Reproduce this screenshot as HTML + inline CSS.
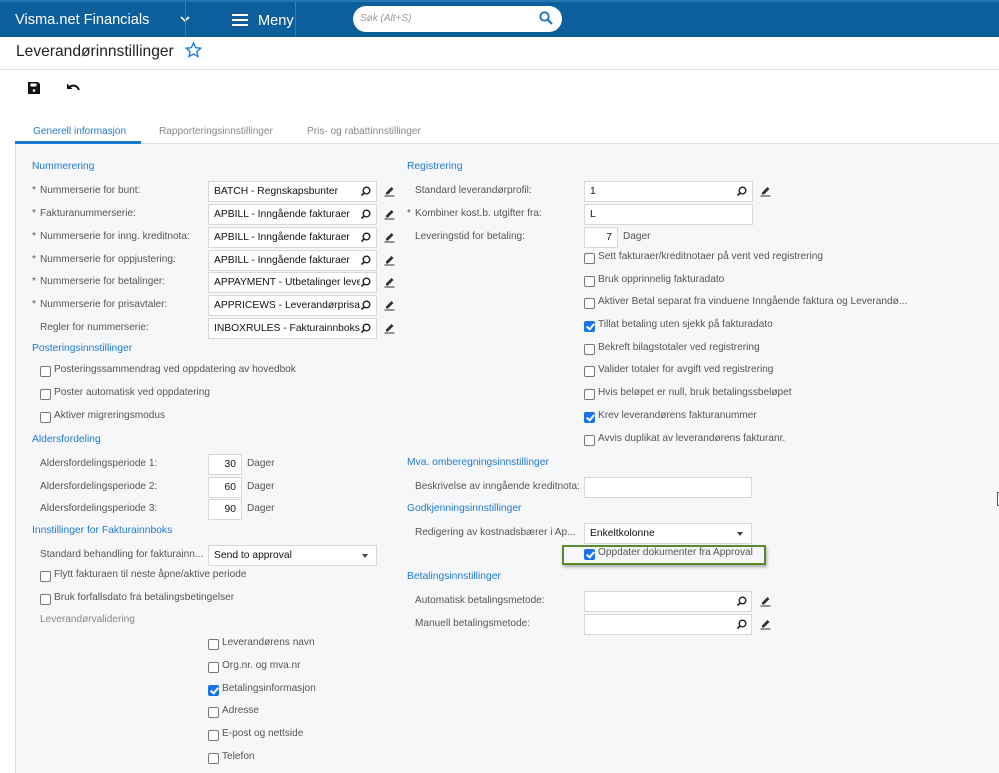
<!DOCTYPE html>
<html><head><meta charset="utf-8"><style>
*{box-sizing:border-box;margin:0;padding:0}
body{width:999px;height:773px;overflow:hidden;background:#fff;font-family:"Liberation Sans",Arial,sans-serif;font-size:10.1px;color:#555;position:relative}
.a{position:absolute;white-space:nowrap;line-height:16px}
.h{color:#1f7ad0;font-size:10.3px}
.in{position:absolute;height:21px;background:#fff;border:1px solid #d6d9dc;color:#111;font-size:10.3px;line-height:19px;padding-left:5px;white-space:nowrap;overflow:hidden}
.cb{position:absolute;width:11px;height:11px;border:1px solid #777;border-radius:2px;background:#fff}
.cb.on{background:#1a73e8;border-color:#1a73e8}
.cb.on:after{content:"";position:absolute;left:3px;top:0px;width:3px;height:6px;border:solid #fff;border-width:0 2px 2px 0;transform:rotate(40deg)}
.dd{position:absolute;right:8px;top:8px;border-left:3.5px solid transparent;border-right:3.5px solid transparent;border-top:4px solid #444}
.st{position:absolute;left:-8px}
</style></head><body>
<div style="position:absolute;left:0;top:0;width:999px;height:37px;background:#0d5f9c;border-top:2px solid #2377b5"></div>
<div class="a" style="left:15px;top:10px;font-size:14.6px;line-height:20px;color:#fff">Visma.net Financials</div>
<svg style="position:absolute;left:180px;top:16px" width="10" height="7"><path d="M1 1l4 4 4-4" stroke="#fff" stroke-width="1.6" fill="none"/></svg>
<div style="position:absolute;left:185px;top:2px;width:1px;height:35px;background:#3a7db0"></div>
<div style="position:absolute;left:295px;top:2px;width:1px;height:35px;background:#3a7db0"></div>
<svg style="position:absolute;left:232px;top:14px" width="16" height="12"><path d="M0 1h16M0 6h16M0 11h16" stroke="#fff" stroke-width="2"/></svg>
<div class="a" style="left:258px;top:11px;font-size:14.6px;line-height:20px;color:#fff">Meny</div>
<div style="position:absolute;left:353px;top:6px;width:209px;height:26px;background:#fff;border-radius:13px"></div>
<div class="a" style="left:360px;top:11px;font-size:10px;color:#999;font-style:italic">Søk (Alt+S)</div>
<svg style="position:absolute;left:539px;top:11px" width="14" height="14"><circle cx="5.5" cy="5.5" r="4.2" stroke="#1a6fb0" stroke-width="1.8" fill="none"/><path d="M8.5 8.5l4.5 4.5" stroke="#1a6fb0" stroke-width="2"/></svg>
<div class="a" style="left:16px;top:42px;font-size:15.6px;line-height:20px;color:#222">Leverandørinnstillinger</div>
<svg style="position:absolute;left:185px;top:42px" width="17" height="16" viewBox="0 0 24 23"><path d="M12 1.5l3.1 6.6 7.2.8-5.4 4.9 1.5 7.1L12 17.3l-6.4 3.6 1.5-7.1L1.7 8.9l7.2-.8z" fill="none" stroke="#1f7ad0" stroke-width="2"/></svg>
<div style="position:absolute;left:0;top:69px;width:999px;height:1px;background:#e2e2e2"></div>
<svg style="position:absolute;left:28px;top:82px" width="12" height="12"><path d="M0 0h10l2 2v10H0z" fill="#111"/><rect x="2.5" y="1.5" width="6" height="3" fill="#fff"/><circle cx="6" cy="8.5" r="1.3" fill="#fff"/></svg>
<svg style="position:absolute;left:67px;top:83px" width="13" height="10"><path d="M2 5C4 1.5 10 1.5 12 7" stroke="#111" stroke-width="2" fill="none"/><path d="M0 0.5v5.5h5.5z" fill="#111"/></svg>
<div class="a" style="left:33px;top:124px;color:#1f7ad0">Generell informasjon</div>
<div class="a" style="left:159px;top:124px;color:#888">Rapporteringsinnstillinger</div>
<div class="a" style="left:307px;top:124px;color:#888">Pris- og rabattinnstillinger</div>
<div style="position:absolute;left:15px;top:143px;width:984px;height:630px;background:#f6f7f9;border-left:1px solid #dcdcdc;border-top:1px solid #e4e4e4"></div>
<div style="position:absolute;left:15px;top:141px;width:126px;height:3px;background:#1c7bd0"></div>

<!-- left -->
<div class="a h" style="left:32px;top:159px">Nummerering</div>
<div class="a" style="left:40px;top:183px"><span class="st">*</span>Nummerserie for bunt:</div>
<div class="a" style="left:40px;top:206px"><span class="st">*</span>Fakturanummerserie:</div>
<div class="a" style="left:40px;top:229px"><span class="st">*</span>Nummerserie for inng. kreditnota:</div>
<div class="a" style="left:40px;top:252px"><span class="st">*</span>Nummerserie for oppjustering:</div>
<div class="a" style="left:40px;top:274px"><span class="st">*</span>Nummerserie for betalinger:</div>
<div class="a" style="left:40px;top:297px"><span class="st">*</span>Nummerserie for prisavtaler:</div>
<div class="a" style="left:40px;top:320px">Regler for nummerserie:</div>
<div class="in" style="left:208px;top:181px;width:169px;padding-right:20px">BATCH - Regnskapsbunter</div>
<div class="in" style="left:208px;top:204px;width:169px;padding-right:20px">APBILL - Inngående fakturaer</div>
<div class="in" style="left:208px;top:227px;width:169px;padding-right:20px">APBILL - Inngående fakturaer</div>
<div class="in" style="left:208px;top:250px;width:169px;padding-right:20px">APBILL - Inngående fakturaer</div>
<div class="in" style="left:208px;top:272px;width:169px;padding-right:20px">APPAYMENT - Utbetalinger leve</div>
<div class="in" style="left:208px;top:295px;width:169px;padding-right:20px">APPRICEWS - Leverandørprisa</div>
<div class="in" style="left:208px;top:318px;width:169px;padding-right:20px">INBOXRULES - Fakturainnboks</div>

<div class="a h" style="left:32px;top:341px">Posteringsinnstillinger</div>
<div class="cb" style="left:40px;top:366px"></div><div class="a" style="left:54px;top:362px">Posteringssammendrag ved oppdatering av hovedbok</div>
<div class="cb" style="left:40px;top:389px"></div><div class="a" style="left:54px;top:385px">Poster automatisk ved oppdatering</div>
<div class="cb" style="left:40px;top:412px"></div><div class="a" style="left:54px;top:408px">Aktiver migreringsmodus</div>
<div class="a h" style="left:32px;top:432px">Aldersfordeling</div>
<div class="a" style="left:40px;top:456px">Aldersfordelingsperiode 1:</div>
<div class="a" style="left:40px;top:479px">Aldersfordelingsperiode 2:</div>
<div class="a" style="left:40px;top:501px">Aldersfordelingsperiode 3:</div>
<div class="in" style="left:208px;top:454px;width:34px;text-align:right;padding-right:5px">30</div>
<div class="in" style="left:208px;top:477px;width:34px;text-align:right;padding-right:5px">60</div>
<div class="in" style="left:208px;top:499px;width:34px;text-align:right;padding-right:5px">90</div>
<div class="a" style="left:247px;top:456px">Dager</div>
<div class="a" style="left:247px;top:479px">Dager</div>
<div class="a" style="left:247px;top:501px">Dager</div>
<div class="a h" style="left:32px;top:523px">Innstillinger for Fakturainnboks</div>
<div class="a" style="left:40px;top:547px">Standard behandling for fakturainn...</div>
<div class="in" style="left:208px;top:545px;width:169px">Send to approval<span class="dd"></span></div>
<div class="cb" style="left:40px;top:571px"></div><div class="a" style="left:54px;top:567px">Flytt fakturaen til neste åpne/aktive periode</div>
<div class="cb" style="left:40px;top:594px"></div><div class="a" style="left:54px;top:590px">Bruk forfallsdato fra betalingsbetingelser</div>
<div class="a" style="left:40px;top:612px;color:#888">Leverandørvalidering</div>
<div class="cb" style="left:208px;top:639px"></div><div class="a" style="left:222px;top:635px">Leverandørens navn</div>
<div class="cb" style="left:208px;top:662px"></div><div class="a" style="left:222px;top:658px">Org.nr. og mva.nr</div>
<div class="cb on" style="left:208px;top:685px"></div><div class="a" style="left:222px;top:681px">Betalingsinformasjon</div>
<div class="cb" style="left:208px;top:707px"></div><div class="a" style="left:222px;top:703px">Adresse</div>
<div class="cb" style="left:208px;top:730px"></div><div class="a" style="left:222px;top:726px">E-post og nettside</div>
<div class="cb" style="left:208px;top:753px"></div><div class="a" style="left:222px;top:749px">Telefon</div>

<!-- right -->
<div class="a h" style="left:407px;top:159px">Registrering</div>
<div class="a" style="left:415px;top:183px">Standard leverandørprofil:</div>
<div class="a" style="left:415px;top:206px"><span class="st">*</span>Kombiner kost.b. utgifter fra:</div>
<div class="a" style="left:415px;top:229px">Leveringstid for betaling:</div>
<div class="in" style="left:584px;top:181px;width:169px">1</div>
<div class="in" style="left:584px;top:204px;width:169px">L</div>
<div class="in" style="left:584px;top:227px;width:34px;text-align:right;padding-right:5px">7</div>
<div class="a" style="left:623px;top:229px">Dager</div>
<div class="cb" style="left:584px;top:253px"></div><div class="a" style="left:598px;top:249px">Sett fakturaer/kreditnotaer på vent ved registrering</div>
<div class="cb" style="left:584px;top:276px"></div><div class="a" style="left:598px;top:272px">Bruk opprinnelig fakturadato</div>
<div class="cb" style="left:584px;top:298px"></div><div class="a" style="left:598px;top:294px">Aktiver Betal separat fra vinduene Inngående faktura og Leverandø...</div>
<div class="cb on" style="left:584px;top:321px"></div><div class="a" style="left:598px;top:317px">Tillat betaling uten sjekk på fakturadato</div>
<div class="cb" style="left:584px;top:344px"></div><div class="a" style="left:598px;top:340px">Bekreft bilagstotaler ved registrering</div>
<div class="cb" style="left:584px;top:366px"></div><div class="a" style="left:598px;top:362px">Valider totaler for avgift ved registrering</div>
<div class="cb" style="left:584px;top:389px"></div><div class="a" style="left:598px;top:385px">Hvis beløpet er null, bruk betalingssbeløpet</div>
<div class="cb on" style="left:584px;top:412px"></div><div class="a" style="left:598px;top:408px">Krev leverandørens fakturanummer</div>
<div class="cb" style="left:584px;top:435px"></div><div class="a" style="left:598px;top:431px">Avvis duplikat av leverandørens fakturanr.</div>
<div class="a h" style="left:407px;top:455px">Mva. omberegningsinnstillinger</div>
<div class="a" style="left:415px;top:479px">Beskrivelse av inngående kreditnota:</div>
<div class="in" style="left:584px;top:477px;width:168px"></div>
<div class="a h" style="left:407px;top:501px">Godkjenningsinnstillinger</div>
<div class="a" style="left:415px;top:525px">Redigering av kostnadsbærer i Ap...</div>
<div class="in" style="left:584px;top:523px;width:168px">Enkeltkolonne<span class="dd"></span></div>
<div style="position:absolute;left:562px;top:545px;width:204px;height:20px;border:2px solid #5a8a2e;box-shadow:1px 2px 3px rgba(0,0,0,.3)"></div>
<div class="cb on" style="left:584px;top:549px"></div><div class="a" style="left:598px;top:545px">Oppdater dokumenter fra Approval</div>
<div class="a h" style="left:407px;top:569px">Betalingsinnstillinger</div>
<div class="a" style="left:415px;top:593px">Automatisk betalingsmetode:</div>
<div class="a" style="left:415px;top:616px">Manuell betalingsmetode:</div>
<div class="in" style="left:584px;top:591px;width:168px"></div>
<div class="in" style="left:584px;top:614px;width:168px"></div>
<div style="position:absolute;left:997px;top:492px;width:3px;height:14px;border:1px solid #555;border-right:none"></div>

<svg width="999" height="773" style="position:absolute;left:0;top:0" fill="none">
<defs>
<g id="s"><circle cx="5.5" cy="4.5" r="3.3" stroke="#222" stroke-width="1.4"/><path d="M3.2 6.8L0.5 9.5" stroke="#222" stroke-width="1.6"/></g>
<g id="p"><path d="M2 7.5L7.5 2l2 2L4 9.5H2z" fill="#333"/><path d="M0.5 11h10" stroke="#333" stroke-width="1"/></g>
</defs>
<rect x="360" y="183" width="15" height="17" fill="#fff"/><rect x="360" y="206" width="15" height="17" fill="#fff"/><rect x="360" y="229" width="15" height="17" fill="#fff"/><rect x="360" y="252" width="15" height="17" fill="#fff"/><rect x="360" y="274" width="15" height="17" fill="#fff"/><rect x="360" y="297" width="15" height="17" fill="#fff"/><rect x="360" y="320" width="15" height="17" fill="#fff"/>
<use href="#s" x="361" y="186"/><use href="#s" x="361" y="209"/><use href="#s" x="361" y="232"/><use href="#s" x="361" y="255"/><use href="#s" x="361" y="277"/><use href="#s" x="361" y="300"/><use href="#s" x="361" y="323"/>
<use href="#p" x="384" y="185"/><use href="#p" x="384" y="208"/><use href="#p" x="384" y="231"/><use href="#p" x="384" y="254"/><use href="#p" x="384" y="276"/><use href="#p" x="384" y="299"/><use href="#p" x="384" y="322"/>
<use href="#s" x="737" y="186"/><use href="#p" x="760" y="185"/>
<use href="#s" x="737" y="596"/><use href="#p" x="760" y="595"/>
<use href="#s" x="737" y="619"/><use href="#p" x="760" y="618"/>
</svg>
</body></html>
